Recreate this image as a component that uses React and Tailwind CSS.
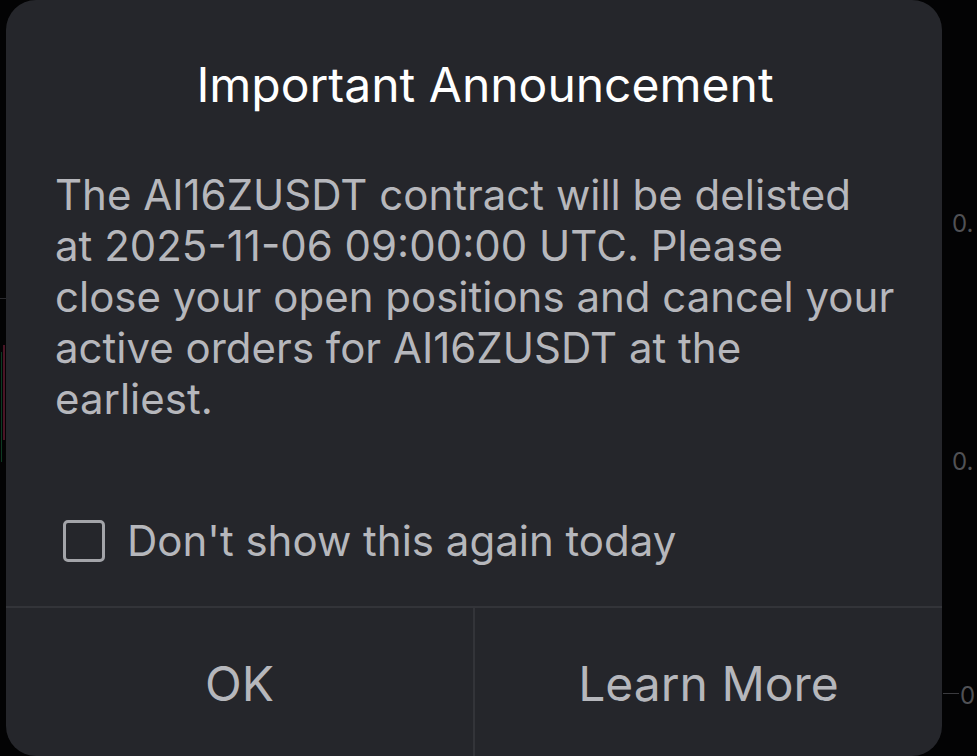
import React, { useState } from "react";

export default function App() {
  const [checked, setChecked] = useState(false);

  return (
    <div
      className="flex h-[756px] w-[977px] overflow-hidden bg-[#030304]"
      style={{ fontFamily: "Inter, 'Noto Sans', sans-serif" }}
    >
      {/* chart bits peeking out on the left */}
      <div className="relative w-[6px] shrink-0">
        <div className="absolute left-[1px] top-[352px] h-[110px] w-[1px] bg-[#0d3a22]" />
        <div className="absolute left-[3px] top-[345px] h-[95px] w-[2px] bg-[#4a1526]" />
        <div className="absolute left-[0px] top-[298px] h-[1px] w-[6px] bg-[#2a2a2e]" />
      </div>

      {/* dialog */}
      <div className="flex h-[756px] w-[936px] shrink-0 flex-col rounded-[30px] bg-[#25262b]">
        <h1 className="pt-[55px] pl-[22px] text-center text-[48px] font-normal leading-[60px] text-white">
          Important Announcement
        </h1>

        <p className="mt-[54px] whitespace-nowrap px-[49px] text-[42px] leading-[51px] text-[#b6b7bc]">
          The AI16ZUSDT contract will be delisted
          <br />
          at 2025-11-06 09:00:00 UTC. Please
          <br />
          close your open positions and cancel your
          <br />
          active orders for AI16ZUSDT at the
          <br />
          earliest.
        </p>

        <label
          className="mt-auto mb-[39px] flex cursor-pointer items-center gap-[22px] pl-[57px]"
          onClick={() => setChecked(!checked)}
        >
          <span className="flex h-[42px] w-[42px] items-center justify-center rounded-[5px] border-[3px] border-[#a3a4a9]">
            {checked && (
              <svg viewBox="0 0 24 24" className="h-7 w-7 text-[#b6b7bc]" fill="none" stroke="currentColor" strokeWidth="3">
                <path d="M5 12l5 5 9-10" />
              </svg>
            )}
          </span>
          <span className="text-[42px] leading-[52px] text-[#b6b7bc]">Don't show this again today</span>
        </label>

        <div className="flex h-[150px] border-t-2 border-[#333439]">
          <button className="flex-1 pt-[4px] text-[48px] text-[#b6b7bc]">OK</button>
          <div className="w-[2px] bg-[#333439]" />
          <button className="flex-1 pt-[4px] text-[48px] text-[#b6b7bc]">Learn More</button>
        </div>
      </div>

      {/* price axis on the right */}
      <div className="relative flex-1 text-[24px] text-[#505155]">
        <span className="absolute left-[10px] top-[206px]">0.</span>
        <span className="absolute left-[10px] top-[444px]">0.</span>
        <div className="absolute left-[1px] top-[693px] h-[1px] w-[16px] bg-[#3a3a3e]" />
        <span className="absolute left-[18px] top-[678px]">0</span>
      </div>
    </div>
  );
}
